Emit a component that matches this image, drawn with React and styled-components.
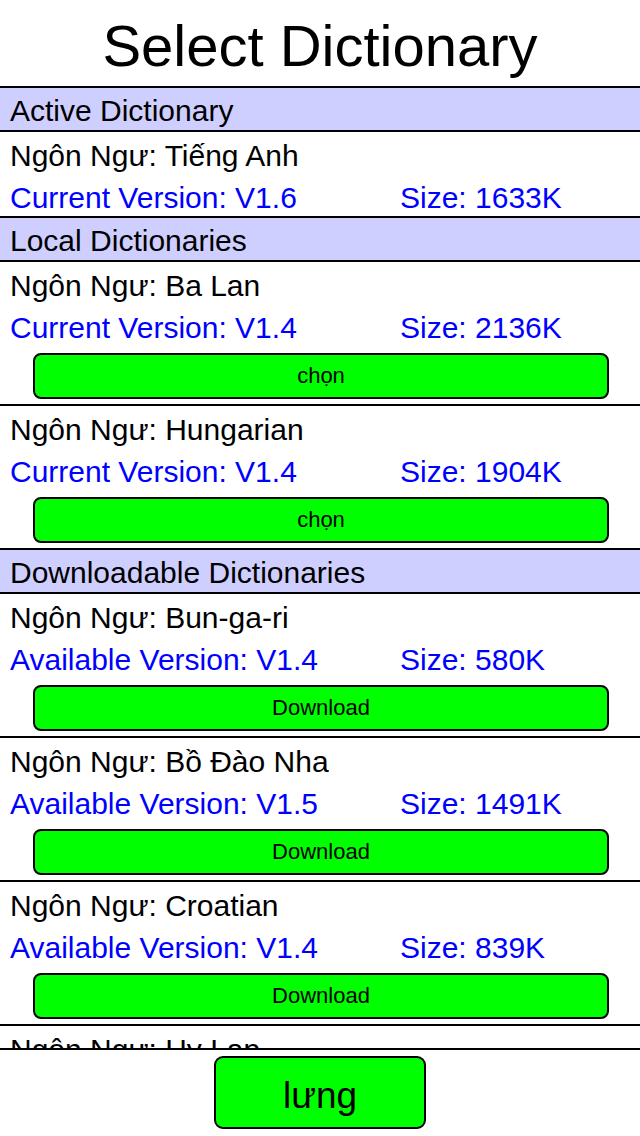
import React from 'react';
import styled, { createGlobalStyle } from 'styled-components';

const GlobalStyle = createGlobalStyle`
  html, body {
    margin: 0;
    padding: 0;
    background: #fff;
  }
  body {
    font-family: "Liberation Sans", Arial, Helvetica, sans-serif;
    color: #000;
  }
`;

const Screen = styled.div`
  width: 640px;
  height: 1136px;
  display: flex;
  flex-direction: column;
  background: #fff;
  overflow: hidden;
`;

const Title = styled.h1`
  margin: 0;
  height: 86px;
  flex: none;
  display: flex;
  align-items: center;
  justify-content: center;
  font-size: 58px;
  font-weight: normal;
  padding-top: 4px;
  box-sizing: border-box;
`;

const List = styled.div`
  flex: 1;
  overflow: hidden;
  display: flex;
  flex-direction: column;
`;

const SectionHeader = styled.div`
  flex: none;
  height: 44px;
  box-sizing: border-box;
  border-top: 2px solid #000;
  background: #cfcfff;
  padding: 2px 0 0 10px;
  font-size: 30px;
  line-height: 42px;
`;

const Item = styled.div`
  flex: none;
  box-sizing: border-box;
  border-top: 2px solid #000;
  padding: 4px 0 ${p => (p.$button ? '5px' : '0')};
`;

const Name = styled.div`
  font-size: 30px;
  line-height: 40px;
  padding-left: 10px;
  white-space: nowrap;
`;

const Meta = styled.div`
  display: grid;
  grid-template-columns: 390px 1fr;
  padding: 2px 0 0 10px;
  height: 40px;
  box-sizing: border-box;
  font-size: 30px;
  line-height: 40px;
  color: #0000ff;
  white-space: nowrap;
`;

const RowButton = styled.button`
  display: block;
  box-sizing: border-box;
  width: 576px;
  height: 46px;
  margin: 7px 0 0 33px;
  padding: 0;
  background: #00ff00;
  border: 2px solid #000;
  border-radius: 8px;
  font-family: "Liberation Sans", Arial, sans-serif;
  font-size: 22px;
  color: #000;
`;

const Footer = styled.div`
  flex: none;
  height: 88px;
  box-sizing: border-box;
  border-top: 2px solid #000;
  display: flex;
  justify-content: center;
  padding-top: 6px;
`;

const BackButton = styled.button`
  width: 212px;
  height: 73px;
  box-sizing: border-box;
  background: #00ff00;
  border: 2px solid #000;
  border-radius: 9px;
  font-family: "Liberation Sans", Arial, sans-serif;
  font-size: 37px;
  color: #000;
  padding: 6px 0 0;
`;

const local = [
  { name: 'Ba Lan', version: 'V1.4', size: '2136K' },
  { name: 'Hungarian', version: 'V1.4', size: '1904K' },
];

const downloadable = [
  { name: 'Bun-ga-ri', version: 'V1.4', size: '580K' },
  { name: 'Bồ Đào Nha', version: 'V1.5', size: '1491K' },
  { name: 'Croatian', version: 'V1.4', size: '839K' },
  { name: 'Hy Lạp', version: 'V1.4', size: '1210K' },
];

const DictItem = ({ name, label, version, size, action }) => (
  <Item $button={!!action}>
    <Name>Ngôn Ngư: {name}</Name>
    <Meta>
      <span>{label}: {version}</span>
      <span>Size: {size}</span>
    </Meta>
    {action && <RowButton>{action}</RowButton>}
  </Item>
);

export default function App() {
  return (
    <Screen>
      <GlobalStyle />
      <Title>Select Dictionary</Title>
      <List>
        <SectionHeader>Active Dictionary</SectionHeader>
        <DictItem name="Tiếng Anh" label="Current Version" version="V1.6" size="1633K" />
        <SectionHeader>Local Dictionaries</SectionHeader>
        {local.map(d => (
          <DictItem key={d.name} {...d} label="Current Version" action="chọn" />
        ))}
        <SectionHeader>Downloadable Dictionaries</SectionHeader>
        {downloadable.map(d => (
          <DictItem key={d.name} {...d} label="Available Version" action="Download" />
        ))}
      </List>
      <Footer>
        <BackButton>lưng</BackButton>
      </Footer>
    </Screen>
  );
}
